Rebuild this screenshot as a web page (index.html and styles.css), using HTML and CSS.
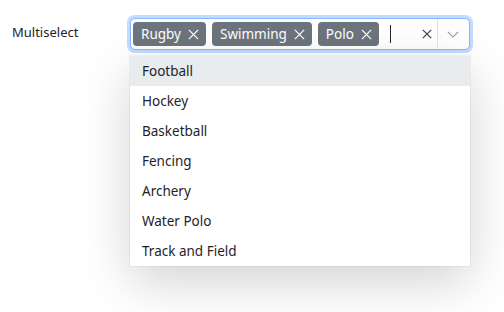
FILE: index.html
```html
<!DOCTYPE html>
<html>
<head>
<meta charset="utf-8">
<link rel="stylesheet" href="styles.css">
</head>
<body>
<div class="row">
  <label class="label">Multiselect</label>
  <div class="field">
    <div class="control">
      <div class="values">
        <span class="tag">Rugby<svg class="tag-x" viewBox="0 0 12 12"><path d="M1 1L11 11M11 1L1 11"/></svg></span>
        <span class="tag">Swimming<svg class="tag-x" viewBox="0 0 12 12"><path d="M1 1L11 11M11 1L1 11"/></svg></span>
        <span class="tag">Polo<svg class="tag-x" viewBox="0 0 12 12"><path d="M1 1L11 11M11 1L1 11"/></svg></span>
        <span class="caret"></span>
      </div>
      <div class="actions">
        <svg class="clear" viewBox="0 0 12 12"><path d="M1 1L11 11M11 1L1 11"/></svg>
        <span class="sep"></span>
        <svg class="chev" viewBox="0 0 14 8"><path d="M1 1L7 7L13 1"/></svg>
      </div>
    </div>
    <ul class="menu">
      <li class="item active">Football</li>
      <li class="item">Hockey</li>
      <li class="item">Basketball</li>
      <li class="item">Fencing</li>
      <li class="item">Archery</li>
      <li class="item">Water Polo</li>
      <li class="item">Track and Field</li>
    </ul>
  </div>
</div>
</body>
</html>
```
FILE: styles.css
```css
html, body {
  margin: 0;
  padding: 0;
  background: #fff;
  font-family: "Noto Sans", "Open Sans", sans-serif;
  color: #212529;
}
body {
  min-height: 312px;
  overflow: hidden;
}
.row {
  display: flex;
  align-items: flex-start;
  padding: 18px 0 0 12px;
}
.label {
  width: 118px;
  font-size: 13px;
  padding-top: 5px;
}
.field {
  display: flex;
  flex-direction: column;
  width: 340px;
}
.control {
  display: flex;
  align-items: center;
  height: 32px;
  box-sizing: border-box;
  border: 1px solid #86b7fe;
  border-radius: 5px;
  box-shadow: 0 0 0 3px rgba(13, 110, 253, 0.25);
  background: #fff;
}
.values {
  flex: 1;
  display: flex;
  align-items: center;
  gap: 6px;
  padding-left: 2px;
}
.tag {
  display: inline-flex;
  align-items: center;
  height: 24px;
  padding: 0 7px 0 8px;
  gap: 7px;
  background: #6c757d;
  color: #fff;
  border-radius: 4px;
  font-size: 13.5px;
}
.tag-x {
  width: 11px;
  height: 11px;
  stroke: #fff;
  stroke-width: 1.4;
  fill: none;
}
.caret {
  width: 1px;
  height: 18px;
  background: #212529;
  margin-left: 5px;
}
.actions {
  display: flex;
  align-items: center;
  height: 100%;
}
.clear {
  width: 10px;
  height: 10px;
  stroke: #444;
  stroke-width: 1.5;
  fill: none;
  margin-right: 5px;
}
.sep {
  width: 1px;
  height: 30px;
  background: #dee2e6;
}
.chev {
  width: 12px;
  height: 7px;
  stroke: #8a9198;
  stroke-width: 1.2;
  fill: none;
  margin: 0 10px 0 9px;
}
.menu {
  margin: 6px 0 0;
  padding: 0;
  list-style: none;
  background: #fff;
  box-shadow: 0 1rem 3rem rgba(0, 0, 0, 0.175), 0 0 0 1px rgba(0, 0, 0, 0.04);
}
.item {
  height: 30px;
  line-height: 30px;
  padding-left: 12px;
  font-size: 13.5px;
  color: #1f2328;
}
.item.active {
  background: #e9ecef;
}
```
